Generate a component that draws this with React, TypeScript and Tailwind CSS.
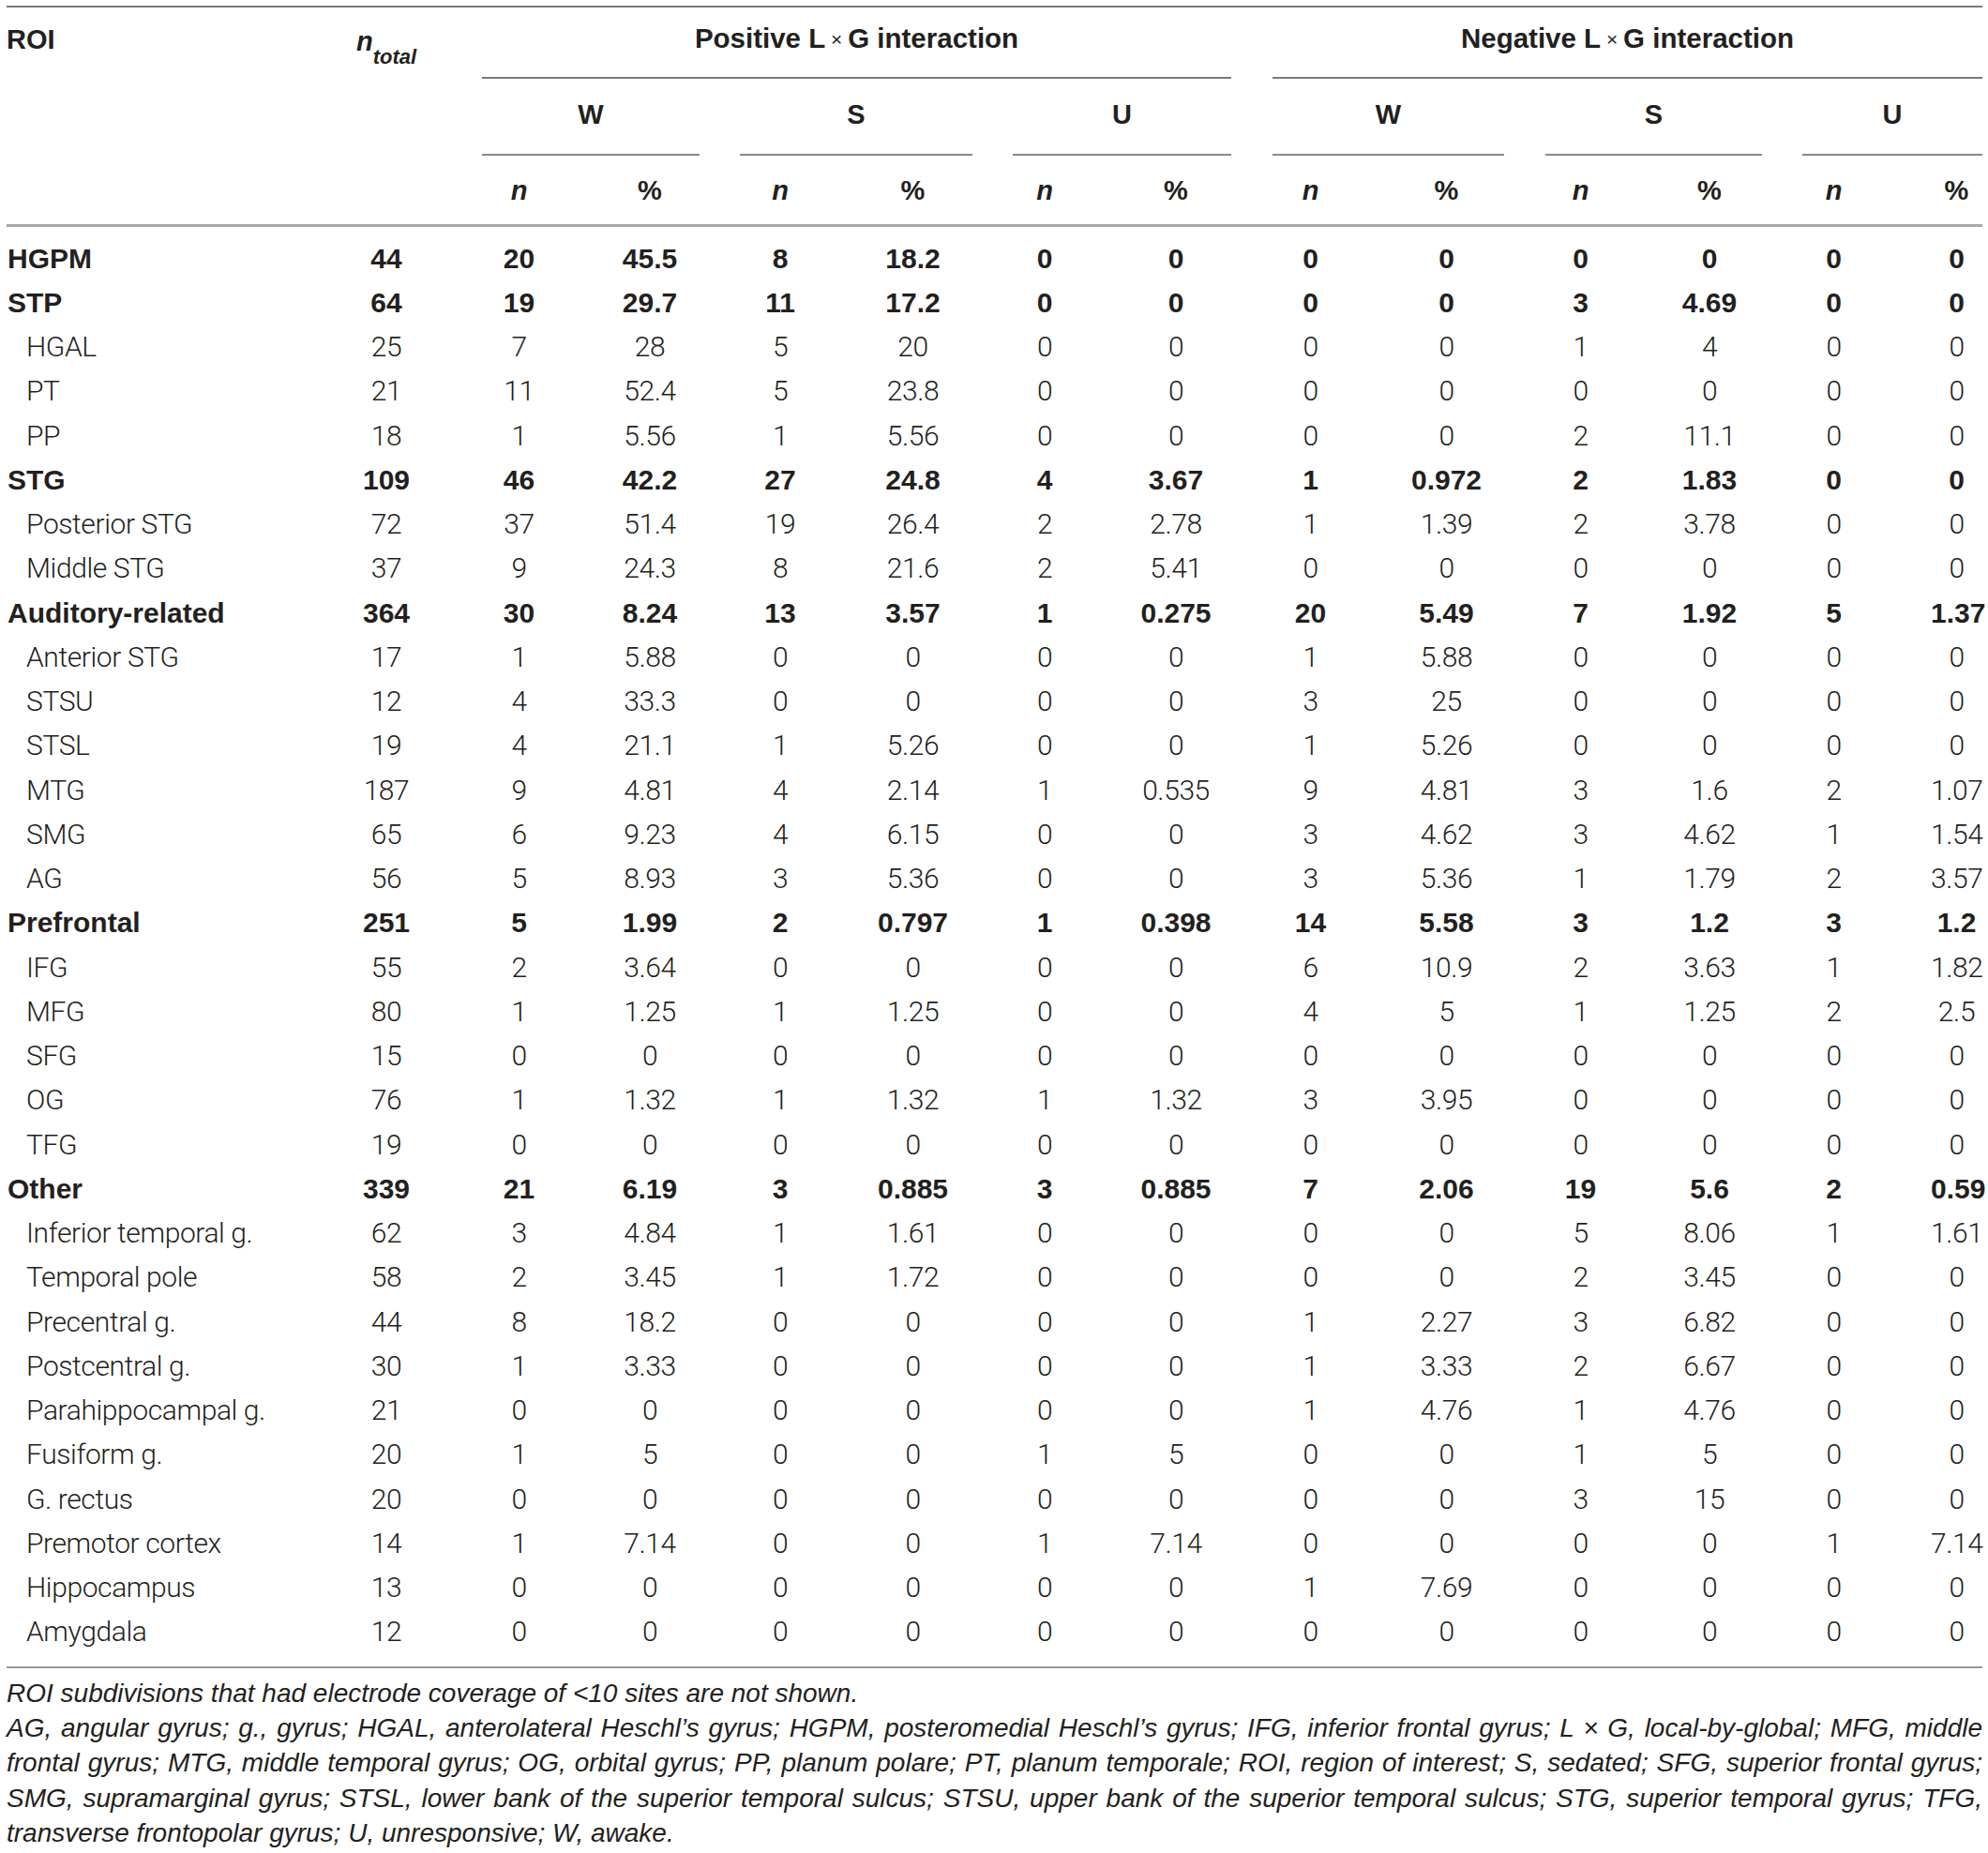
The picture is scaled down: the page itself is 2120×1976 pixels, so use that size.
const COLS =
  'grid grid-cols-[334px_142px_141px_138px_140px_143px_138px_142px_145px_145px_141px_134px_131px_93px]';

const BASE = "font-['Liberation_Sans',Arial,sans-serif] text-[#231f20]";
const LIGHT = "font-['Roboto','Liberation_Sans',Arial,sans-serif] font-light tracking-[-0.4px]";

// label | ntotal | pos W n % | pos S n % | pos U n % | neg W n % | neg S n % | neg U n %
const ROWS: { bold?: boolean; cells: string }[] = [
  { bold: true, cells: 'HGPM|44|20|45.5|8|18.2|0|0|0|0|0|0|0|0' },
  { bold: true, cells: 'STP|64|19|29.7|11|17.2|0|0|0|0|3|4.69|0|0' },
  { cells: 'HGAL|25|7|28|5|20|0|0|0|0|1|4|0|0' },
  { cells: 'PT|21|11|52.4|5|23.8|0|0|0|0|0|0|0|0' },
  { cells: 'PP|18|1|5.56|1|5.56|0|0|0|0|2|11.1|0|0' },
  { bold: true, cells: 'STG|109|46|42.2|27|24.8|4|3.67|1|0.972|2|1.83|0|0' },
  { cells: 'Posterior STG|72|37|51.4|19|26.4|2|2.78|1|1.39|2|3.78|0|0' },
  { cells: 'Middle STG|37|9|24.3|8|21.6|2|5.41|0|0|0|0|0|0' },
  { bold: true, cells: 'Auditory-related|364|30|8.24|13|3.57|1|0.275|20|5.49|7|1.92|5|1.37' },
  { cells: 'Anterior STG|17|1|5.88|0|0|0|0|1|5.88|0|0|0|0' },
  { cells: 'STSU|12|4|33.3|0|0|0|0|3|25|0|0|0|0' },
  { cells: 'STSL|19|4|21.1|1|5.26|0|0|1|5.26|0|0|0|0' },
  { cells: 'MTG|187|9|4.81|4|2.14|1|0.535|9|4.81|3|1.6|2|1.07' },
  { cells: 'SMG|65|6|9.23|4|6.15|0|0|3|4.62|3|4.62|1|1.54' },
  { cells: 'AG|56|5|8.93|3|5.36|0|0|3|5.36|1|1.79|2|3.57' },
  { bold: true, cells: 'Prefrontal|251|5|1.99|2|0.797|1|0.398|14|5.58|3|1.2|3|1.2' },
  { cells: 'IFG|55|2|3.64|0|0|0|0|6|10.9|2|3.63|1|1.82' },
  { cells: 'MFG|80|1|1.25|1|1.25|0|0|4|5|1|1.25|2|2.5' },
  { cells: 'SFG|15|0|0|0|0|0|0|0|0|0|0|0|0' },
  { cells: 'OG|76|1|1.32|1|1.32|1|1.32|3|3.95|0|0|0|0' },
  { cells: 'TFG|19|0|0|0|0|0|0|0|0|0|0|0|0' },
  { bold: true, cells: 'Other|339|21|6.19|3|0.885|3|0.885|7|2.06|19|5.6|2|0.59' },
  { cells: 'Inferior temporal g.|62|3|4.84|1|1.61|0|0|0|0|5|8.06|1|1.61' },
  { cells: 'Temporal pole|58|2|3.45|1|1.72|0|0|0|0|2|3.45|0|0' },
  { cells: 'Precentral g.|44|8|18.2|0|0|0|0|1|2.27|3|6.82|0|0' },
  { cells: 'Postcentral g.|30|1|3.33|0|0|0|0|1|3.33|2|6.67|0|0' },
  { cells: 'Parahippocampal g.|21|0|0|0|0|0|0|1|4.76|1|4.76|0|0' },
  { cells: 'Fusiform g.|20|1|5|0|0|1|5|0|0|1|5|0|0' },
  { cells: 'G. rectus|20|0|0|0|0|0|0|0|0|3|15|0|0' },
  { cells: 'Premotor cortex|14|1|7.14|0|0|1|7.14|0|0|0|0|1|7.14' },
  { cells: 'Hippocampus|13|0|0|0|0|0|0|1|7.69|0|0|0|0' },
  { cells: 'Amygdala|12|0|0|0|0|0|0|0|0|0|0|0|0' },
];

const Times = () => <span className="text-[21px] font-normal"> × </span>;

function SubHead({ label, className }: { label: string; className: string }) {
  return (
    <div
      className={`col-span-2 flex items-center justify-center pb-[2px] border-b-2 border-[#8a8a8a] text-[29px] font-bold ${className}`}
    >
      {label}
    </div>
  );
}

function NPct() {
  return (
    <>
      <div className="flex items-center justify-center pt-[3px] text-[29px] font-bold italic">n</div>
      <div className="flex items-center justify-center pt-[3px] text-[29px] font-bold">%</div>
    </>
  );
}

export default function App() {
  return (
    <div className={`${BASE} w-[2120px] bg-white pl-[7px] pr-[6px] pt-[6px] pb-[8px]`}>
      <div className="border-t-2 border-[#7a7a7a]" />

      {/* header */}
      <div className={`${COLS} grid-rows-[76px_82px_73px]`}>
        <div className="row-span-3 pt-[19px] text-[29px] font-bold leading-[30px]">ROI</div>
        <div className="row-span-3 pt-[21px] flex justify-center text-[29px] font-bold italic leading-[30px]">
          <span>
            n<sub className="text-[22px] align-[-8px]">total</sub>
          </span>
        </div>
        <div className="col-span-6 ml-[31px] mr-[12px] flex items-center justify-center pb-[7px] border-b-2 border-[#7a7a7a] text-[29.5px] font-bold whitespace-pre">
          Positive L<Times />G interaction
        </div>
        <div className="col-span-6 ml-[32px] flex items-center justify-center pb-[7px] border-b-2 border-[#7a7a7a] text-[29.5px] font-bold whitespace-pre">
          Negative L<Times />G interaction
        </div>

        <SubHead label="W" className="ml-[31px] mr-[16px]" />
        <SubHead label="S" className="ml-[27px] mr-[8px]" />
        <SubHead label="U" className="ml-[35px] mr-[12px]" />
        <SubHead label="W" className="ml-[32px] mr-[11px]" />
        <SubHead label="S" className="ml-[33px] mr-[11px]" />
        <SubHead label="U" className="ml-[32px]" />

        <NPct />
        <NPct />
        <NPct />
        <NPct />
        <NPct />
        <div className="flex items-center justify-center pt-[3px] text-[29px] font-bold italic">n</div>
        <div className="flex items-center justify-center pl-[38px] pt-[3px] text-[29px] font-bold">%</div>
      </div>

      <div className="border-t-[3px] border-[#a9a9a9]" />

      {/* body */}
      <div className="pt-[10px] pb-[13px]">
        {ROWS.map((r, i) => {
          const c = r.cells.split('|');
          return (
            <div
              key={i}
              className={`${COLS} h-[47.26px] items-center text-[30px] leading-[30px] ${r.bold ? 'font-bold' : LIGHT}`}
            >
              <div className={r.bold ? 'pl-[1px]' : 'pl-[21px]'}>{c[0]}</div>
              {c.slice(1).map((v, j) => (
                <div key={j} className={`text-center ${j === 12 ? 'pl-[38px]' : ''}`}>
                  {v}
                </div>
              ))}
            </div>
          );
        })}
      </div>

      <div className="border-t-2 border-[#9a9a9a]" />

      {/* footnotes */}
      <div className="mt-[8px] text-[28px] leading-[37.2px] italic whitespace-nowrap">
        <p>ROI subdivisions that had electrode coverage of &lt;10 sites are not shown.</p>
        <p className="text-justify [text-align-last:justify]">
          AG, angular gyrus; g., gyrus; HGAL, anterolateral Heschl’s gyrus; HGPM, posteromedial Heschl’s gyrus; IFG,
          inferior frontal gyrus; L × G, local-by-global; MFG, middle
        </p>
        <p className="text-justify [text-align-last:justify]">
          frontal gyrus; MTG, middle temporal gyrus; OG, orbital gyrus; PP, planum polare; PT, planum temporale; ROI,
          region of interest; S, sedated; SFG, superior frontal gyrus;
        </p>
        <p className="text-justify [text-align-last:justify]">
          SMG, supramarginal gyrus; STSL, lower bank of the superior temporal sulcus; STSU, upper bank of the superior
          temporal sulcus; STG, superior temporal gyrus; TFG,
        </p>
        <p>transverse frontopolar gyrus; U, unresponsive; W, awake.</p>
      </div>
    </div>
  );
}
